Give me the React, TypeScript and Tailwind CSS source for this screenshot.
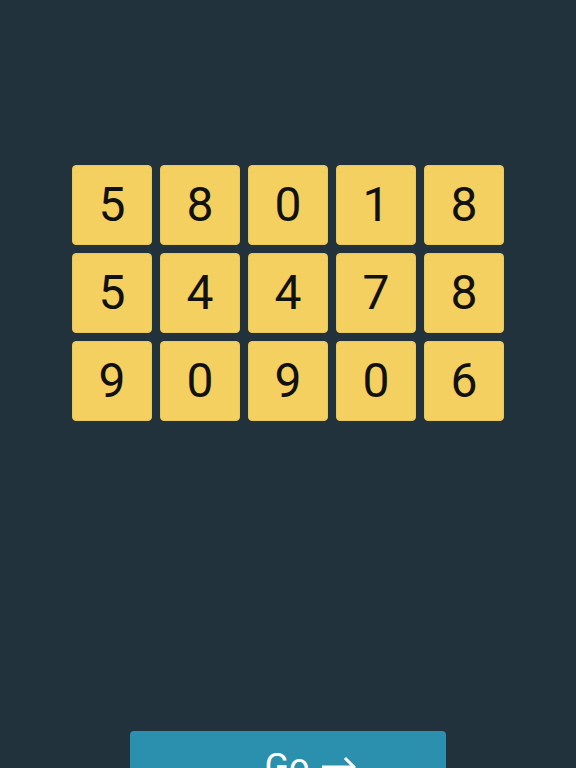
import React from "react";

const rows = [
  ["5", "8", "0", "1", "8"],
  ["5", "4", "4", "7", "8"],
  ["9", "0", "9", "0", "6"],
];

export default function App() {
  return (
    <div
      className="w-[576px] h-[768px] overflow-hidden bg-[#22323d] flex flex-col items-center"
      style={{ fontFamily: "Roboto, 'Liberation Sans', sans-serif" }}
    >
      <div className="mt-[165px] grid grid-cols-5 gap-2">
        {rows.flat().map((d, i) => (
          <div
            key={i}
            className="w-[80px] h-[80px] rounded-[4px] bg-[#f3d05f] border border-[#e9c857] flex items-center justify-center text-[48px] leading-none text-[#111111]"
          >
            {d}
          </div>
        ))}
      </div>
      <button className="mt-[310px] w-[316px] h-[80px] shrink-0 rounded-[4px] bg-[#2a90ae] text-white text-[36px] leading-[42px] pt-[15px] pl-[44px] flex justify-center items-start gap-[12px]">
        <span>Go</span>
        <svg width="34" height="42" viewBox="0 0 34 42" fill="none" stroke="white" strokeWidth="3" strokeLinecap="square" aria-hidden>
          <path d="M1 21 H31" />
          <path d="M24 13 L32 21 L24 29" />
        </svg>
      </button>
    </div>
  );
}
